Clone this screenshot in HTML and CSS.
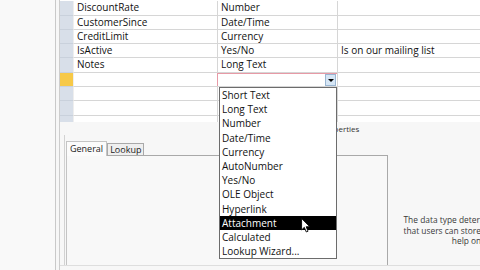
FILE: index.html
```html
<!DOCTYPE html>
<html>
<head>
<meta charset="utf-8">
<link rel="stylesheet" href="styles.css">
</head>
<body>
<div class="app">
  <div class="left"></div>
  <div class="main">
    <div class="grid">
      <div class="row"><div class="sel"></div><div class="cell c1">DiscountRate</div><div class="cell c2">Number</div><div class="cell c3"></div></div>
      <div class="row"><div class="sel"></div><div class="cell c1">CustomerSince</div><div class="cell c2">Date/Time</div><div class="cell c3"></div></div>
      <div class="row"><div class="sel"></div><div class="cell c1">CreditLimit</div><div class="cell c2">Currency</div><div class="cell c3"></div></div>
      <div class="row"><div class="sel"></div><div class="cell c1">IsActive</div><div class="cell c2">Yes/No</div><div class="cell c3">Is on our mailing list</div></div>
      <div class="row"><div class="sel"></div><div class="cell c1">Notes</div><div class="cell c2">Long Text</div><div class="cell c3"></div></div>
      <div class="row"><div class="sel current"></div><div class="cell c1"></div><div class="cell c2 combo-cell"><div class="combo"><div class="combo-text"></div><div class="combo-btn"><span class="tri"></span></div></div></div><div class="cell c3"></div></div>
      <div class="row"><div class="sel"></div><div class="cell c1"></div><div class="cell c2"></div><div class="cell c3"></div></div>
      <div class="row"><div class="sel"></div><div class="cell c1"></div><div class="cell c2"></div><div class="cell c3"></div></div>
      <div class="row last"><div class="sel"></div><div class="cell c1"></div><div class="cell c2"></div><div class="cell c3"></div></div>
    </div>
    <div class="props">
      <div class="props-title">Field Properties</div>
      <div class="props-body">
        <div class="tabwrap">
          <div class="tabs">
            <div class="tab active">General</div>
            <div class="tab">Lookup</div>
          </div>
          <div class="panel"></div>
        </div>
        <div class="help">The data type determines the kind of values<br>that users can store in the field. Press F1 for<br>help on data types.</div>
      </div>
      <div class="bottom-line"></div>
    </div>
  </div>
</div>
<ul class="dropdown">
  <li>Short Text</li>
  <li>Long Text</li>
  <li>Number</li>
  <li>Date/Time</li>
  <li>Currency</li>
  <li>AutoNumber</li>
  <li>Yes/No</li>
  <li>OLE Object</li>
  <li>Hyperlink</li>
  <li class="hl">Attachment</li>
  <li>Calculated</li>
  <li>Lookup Wizard...</li>
</ul>
<svg class="cursor" width="10" height="15" viewBox="0 0 11 17"><path d="M0.5 0.5 L0.5 13.5 L3.6 10.6 L5.8 15.8 L7.8 15 L5.7 9.9 L9.8 9.9 Z" fill="#fff" stroke="#000" stroke-width="1" stroke-linejoin="miter"/></svg>
</body>
</html>
```
FILE: styles.css
```css
html, body {
  margin: 0;
  padding: 0;
}
body {
  width: 480px;
  height: 270px;
  overflow: hidden;
  background: #f7f7f7;
  font-family: "Open Sans", "Noto Sans", sans-serif;
  font-size: 10px;
  color: #111;
  position: relative;
}
.app {
  display: flex;
  height: 270px;
}
.left {
  width: 55px;
  background: #f9f9f9;
  border-right: 1px solid #c9c9c9;
  flex: none;
}
.main {
  flex: 1;
  margin-left: 3px;
  border-left: 1px solid #cdcdcd;
  display: flex;
  flex-direction: column;
  min-width: 0;
}
.grid {
  background: #fff;
  height: 122px;
  box-sizing: border-box;
  padding-top: 1.3px;
  overflow: hidden;
  flex: none;
}
.row {
  display: flex;
  height: 14.3px;
}
.sel {
  width: 13px;
  flex: none;
  background: #d8dfe9;
  box-sizing: border-box;
  border-bottom: 1px solid #c9d1dc;
}
.sel.current {
  background: #f7c948;
}
.cell {
  box-sizing: border-box;
  border-bottom: 1px solid #d6d6d6;
  border-right: 1px solid #d6d6d6;
  padding-left: 3px;
  line-height: 13px;
  white-space: nowrap;
  overflow: hidden;
}
.row.last .cell, .row.last .sel {
  border-bottom: none;
}
.c1 {
  width: 145px;
  flex: none;
  border-left: 1px solid #eeeeee;
}
.c2 {
  width: 120px;
  flex: none;
}
.c3 {
  flex: 1;
  border-right: none;
}
.combo-cell {
  padding: 0;
  overflow: visible;
}
.combo {
  display: flex;
  height: 100%;
  box-sizing: border-box;
  border-top: 1px solid #e79aa6;
  border-left: 1px solid #e79aa6;
  margin-left: -1px;
}
.combo-text {
  flex: 1;
}
.combo-btn {
  width: 11px;
  flex: none;
  background: #d6e6f5;
  border: 1px solid #9ab6d2;
  box-sizing: border-box;
  display: flex;
  align-items: center;
  justify-content: center;
  margin-right: 1px;
}
.tri {
  width: 0;
  height: 0;
  border-left: 3px solid transparent;
  border-right: 3px solid transparent;
  border-top: 3px solid #000;
  margin-top: 1px;
}
.props {
  flex: 1;
  display: flex;
  flex-direction: column;
  position: relative;
}
.props-title {
  font-size: 8px;
  color: #333;
  padding-left: 241px;
  padding-top: 1px;
  height: 12px;
  line-height: 12px;
}
.props-body {
  display: flex;
  flex: 1;
  margin-left: 4px;
  border-left: 1px solid #d2d2d2;
  padding-left: 1px;
}
.tabwrap {
  display: flex;
  flex-direction: column;
  width: 322px;
  flex: none;
  padding-top: 5px;
}
.tabs {
  display: flex;
  align-items: flex-end;
  height: 15px;
}
.tab {
  font-size: 9px;
  line-height: 11px;
  padding: 0 2px;
  border: 1px solid #a9a9a9;
  border-bottom: none;
  background: #efefef;
  height: 12px;
  box-sizing: border-box;
  color: #222;
}
.tab.active {
  background: #fbfbfb;
  height: 15px;
  line-height: 13px;
  padding: 0 3px;
  border-color: #c4c4c4;
  margin-bottom: -1px;
  position: relative;
  z-index: 1;
}
.panel {
  flex: 1;
  border: 1px solid #a9a9a9;
  border-bottom: none;
  border-left-color: #c4c4c4;
  background: #f8f8f8;
}
.help {
  width: 202px;
  flex: none;
  text-align: center;
  font-size: 8.4px;
  line-height: 10.6px;
  color: #3a3a3a;
  white-space: nowrap;
  padding-top: 80px;
}
.bottom-line {
  height: 4px;
  border-top: 1px solid #dedede;
  flex: none;
}
.dropdown {
  position: absolute;
  left: 219px;
  top: 87px;
  width: 118px;
  margin: 0;
  padding: 0;
  list-style: none;
  background: #fff;
  border: 1px solid #6c6c6c;
  box-sizing: border-box;
  z-index: 5;
}
.dropdown li {
  height: 14.2px;
  line-height: 14px;
  padding-left: 2px;
  white-space: nowrap;
}
.dropdown li.hl {
  background: #000;
  color: #fff;
}
.cursor {
  position: absolute;
  left: 301px;
  top: 218px;
  z-index: 6;
}
```
